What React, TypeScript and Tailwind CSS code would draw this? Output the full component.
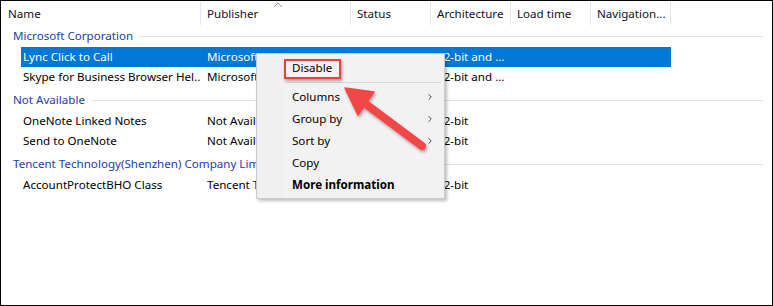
import { ChevronRight } from 'lucide-react'

type Row = { name: string; publisher: string; status: string; arch: string; selected?: boolean }

const groups: { title: string; rows: Row[] }[] = [
  {
    title: 'Microsoft Corporation',
    rows: [
      { name: 'Lync Click to Call', publisher: 'Microsoft Corporation', status: 'Enabled', arch: '32-bit and ...', selected: true },
      { name: 'Skype for Business Browser Hel...', publisher: 'Microsoft Corporation', status: 'Enabled', arch: '32-bit and ...' },
    ],
  },
  {
    title: 'Not Available',
    rows: [
      { name: 'OneNote Linked Notes', publisher: 'Not Available', status: 'Enabled', arch: '32-bit' },
      { name: 'Send to OneNote', publisher: 'Not Available', status: 'Enabled', arch: '32-bit' },
    ],
  },
  {
    title: 'Tencent Technology(Shenzhen) Company Limited',
    rows: [
      { name: 'AccountProtectBHO Class', publisher: 'Tencent Technology(Shenzhen)...', status: 'Enabled', arch: '32-bit' },
    ],
  },
]

const menuItems = [
  { label: 'Columns', sub: true },
  { label: 'Group by', sub: true },
  { label: 'Sort by', sub: true },
  { label: 'Copy' },
  { label: 'More information', bold: true },
]

export default function App() {
  return (
    <div className="relative h-[306px] w-[773px] overflow-hidden border border-black bg-white text-[11.6px] text-black" style={{ fontFamily: '"Noto Sans", sans-serif' }}>
      {/* column headers */}
      <div className="relative flex h-[25px] items-center text-[#111122]">
        <div className="flex h-[23px] w-[200px] items-center border-r border-[#e5e5e5] pl-[7px]">Name</div>
        <div className="flex h-[23px] w-[150px] items-center border-r border-[#e5e5e5] pl-[6px]">Publisher</div>
        <div className="flex h-[23px] w-[80px] items-center border-r border-[#e5e5e5] pl-[6px]">Status</div>
        <div className="flex h-[23px] w-[80px] items-center border-r border-[#e5e5e5] pl-[6px]">Architecture</div>
        <div className="flex h-[23px] w-[80px] items-center border-r border-[#e5e5e5] pl-[6px]">Load time</div>
        <div className="flex h-[23px] w-[80px] items-center border-r border-[#e5e5e5] pl-[6px]">Navigation...</div>
        <svg className="absolute left-[272px] top-[1px]" width="10" height="6" viewBox="0 0 10 6">
          <path d="M1 5 L5 1 L9 5" fill="none" stroke="#9a9a9a" strokeWidth="1" />
        </svg>
      </div>

      {/* grouped list */}
      <div className="flex flex-col gap-[3px]">
        {groups.map((g) => (
          <div key={g.title} className="flex flex-col">
            <div className="flex h-[20px] items-center pl-[12px] pr-[9px]">
              <span className="whitespace-nowrap text-[#1e3ca8]">{g.title}</span>
              <div className="ml-[6px] h-px flex-1 bg-[#dde1ea]" />
            </div>
            <div className="mt-px flex flex-col">
              {g.rows.map((r) => (
                <div
                  key={r.name}
                  className={`ml-[20px] flex h-[20px] w-[650px] items-center whitespace-nowrap ${r.selected ? 'bg-[#0078d7] text-white' : ''}`}
                >
                  <div className="w-[179px] overflow-hidden pl-[2px]">{r.name}</div>
                  <div className="w-[150px] overflow-hidden pl-[7px]">{r.publisher}</div>
                  <div className="w-[80px] overflow-hidden pl-[7px]">{r.status}</div>
                  <div className="w-[80px] overflow-hidden pl-[7px]">{r.arch}</div>
                  <div className="w-[80px]" />
                  <div className="w-[80px]" />
                </div>
              ))}
            </div>
          </div>
        ))}
      </div>

      {/* context menu */}
      <div className="absolute left-[255px] top-[52px] flex w-[189px] border border-[#cccccc] bg-[#f2f2f2] shadow-[2px_2px_3px_rgba(0,0,0,0.25)]">
        <div className="w-[28px] bg-[#f0f0f0]" />
        <div className="flex flex-1 flex-col pb-[2px] pt-[3px]">
          <div className="flex h-[22px] items-center pl-[7px]">Disable</div>
          <div className="flex h-[7px] items-center pr-[3px]">
            <div className="h-px w-full bg-[#d7d7d7]" />
          </div>
          {menuItems.map((m) => (
            <div key={m.label} className={`flex h-[22px] items-center justify-between pl-[7px] pr-[9px] ${m.bold ? 'font-bold' : ''}`}>
              <span className="whitespace-nowrap">{m.label}</span>
              {m.sub && <ChevronRight className="h-[10px] w-[10px] text-[#333]" strokeWidth={2} />}
            </div>
          ))}
        </div>
        {/* highlight box */}
        <div className="absolute left-[27px] top-[5px] h-[20px] w-[57px] border-2 border-[#e8413e] shadow-[1px_2px_3px_rgba(0,0,0,0.35)]" />
      </div>

      {/* red arrow */}
      <svg className="pointer-events-none absolute left-0 top-0" width="773" height="306" viewBox="0 0 773 306">
        <defs>
          <filter id="sh" x="-20%" y="-20%" width="140%" height="140%">
            <feDropShadow dx="1" dy="2" stdDeviation="1.5" floodColor="#000" floodOpacity="0.35" />
          </filter>
        </defs>
        <g filter="url(#sh)" fill="#f24646" stroke="#f24646">
          <line x1="362" y1="101" x2="421" y2="145" strokeWidth="8" strokeLinecap="round" />
          <polygon points="344,87 373,91 357,114" strokeWidth="1.5" strokeLinejoin="round" />
        </g>
      </svg>
    </div>
  )
}
